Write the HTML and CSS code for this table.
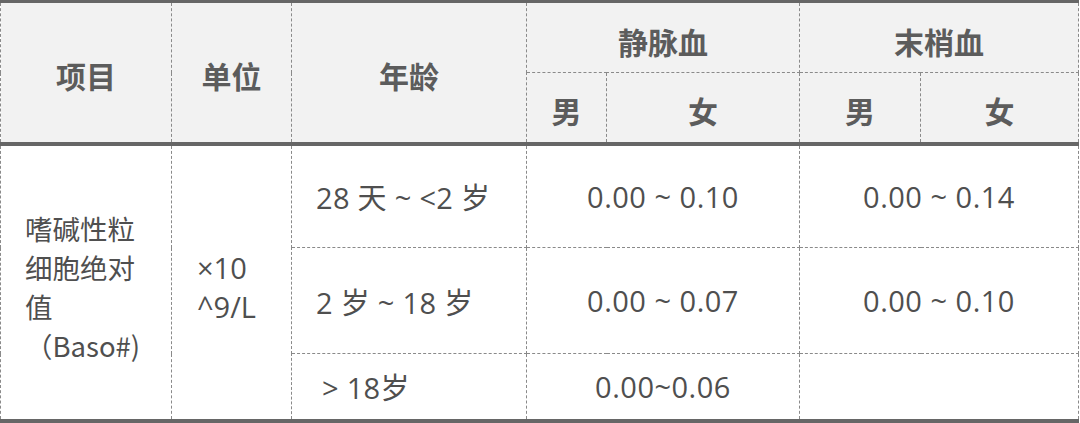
FILE: index.html
```html
<!DOCTYPE html>
<html lang="zh-CN">
<head>
<meta charset="utf-8">
<title>嗜碱性粒细胞绝对值参考区间</title>
<link rel="stylesheet" href="styles.css">
</head>
<body>
<table class="ref-table">
  <colgroup>
    <col class="c-item">
    <col class="c-unit">
    <col class="c-age">
    <col class="c-vm">
    <col class="c-vf">
    <col class="c-pm">
    <col class="c-pf">
  </colgroup>
  <thead>
    <tr class="head-top">
      <th rowspan="2">项目</th>
      <th rowspan="2">单位</th>
      <th rowspan="2">年龄</th>
      <th colspan="2">静脉血</th>
      <th colspan="2">末梢血</th>
    </tr>
    <tr class="head-sub">
      <th>男</th>
      <th>女</th>
      <th>男</th>
      <th>女</th>
    </tr>
  </thead>
  <tbody>
    <tr class="row-a">
      <td rowspan="3" class="item">嗜碱性粒细胞绝对值<span class="paren">（Baso#)</span></td>
      <td rowspan="3" class="unit">×10<br>^9/L</td>
      <td class="age">28 天 ~ &lt;2 岁</td>
      <td colspan="2" class="val">0.00 ~ 0.10</td>
      <td colspan="2" class="val">0.00 ~ 0.14</td>
    </tr>
    <tr class="row-b">
      <td class="age">2 岁 ~ 18 岁</td>
      <td colspan="2" class="val">0.00 ~ 0.07</td>
      <td colspan="2" class="val">0.00 ~ 0.10</td>
    </tr>
    <tr class="row-c">
      <td class="age age-last">&gt; 18岁</td>
      <td colspan="2" class="val">0.00~0.06</td>
      <td colspan="2" class="val"></td>
    </tr>
  </tbody>
</table>
</body>
</html>
```

FILE: styles.css
```css
html, body {
  margin: 0;
  padding: 0;
  background: #ffffff;
}

.ref-table {
  width: 1079px;
  table-layout: fixed;
  border-collapse: collapse;
  font-family: "Open Sans", "Noto Sans CJK SC", sans-serif;
  color: #4f4f4f;
  border-top: 3px solid #666666;
  border-bottom: 4px solid #666666;
}

.c-item { width: 171px; }
.c-unit { width: 120px; }
.c-age { width: 235px; }
.c-vm { width: 80px; }
.c-vf { width: 193px; }
.c-pm { width: 121px; }
.c-pf { width: 158px; }

.ref-table th,
.ref-table td {
  border: 1px dashed #8a8a8a;
  padding: 0;
}

.ref-table thead {
  border-bottom: 4px solid #666666;
}

.ref-table thead th {
  background: #f2f2f2;
  color: #5c5c5c;
  font-family: "Noto Sans CJK SC", sans-serif;
  font-weight: 700;
  font-size: 30px;
  line-height: 40px;
  text-align: center;
  vertical-align: middle;
  padding-top: 6px;
}

.ref-table thead tr.head-sub th {
  border-bottom: 4px solid #666666;
}

.head-top { height: 71px; }
.head-sub { height: 71px; }

.ref-table tbody td {
  font-size: 29px;
  vertical-align: middle;
}

.row-a { height: 104px; }
.row-b { height: 106px; }
.row-c { height: 67px; }

.item {
  text-align: left;
  padding: 0 20px 0 24px !important;
  line-height: 39px;
  font-family: "Noto Sans CJK SC", sans-serif;
  font-size: 27.5px !important;
  padding-top: 10px !important;
}

.unit {
  text-align: left;
  line-height: 39px;
  padding-left: 25px !important;
  padding-top: 10px !important;
}

.age {
  text-align: left;
  padding-left: 24px !important;
  letter-spacing: 0.3px;
}

.age-last {
  padding-left: 30px !important;
}

.val {
  text-align: center;
  letter-spacing: 0.5px;
}
```
